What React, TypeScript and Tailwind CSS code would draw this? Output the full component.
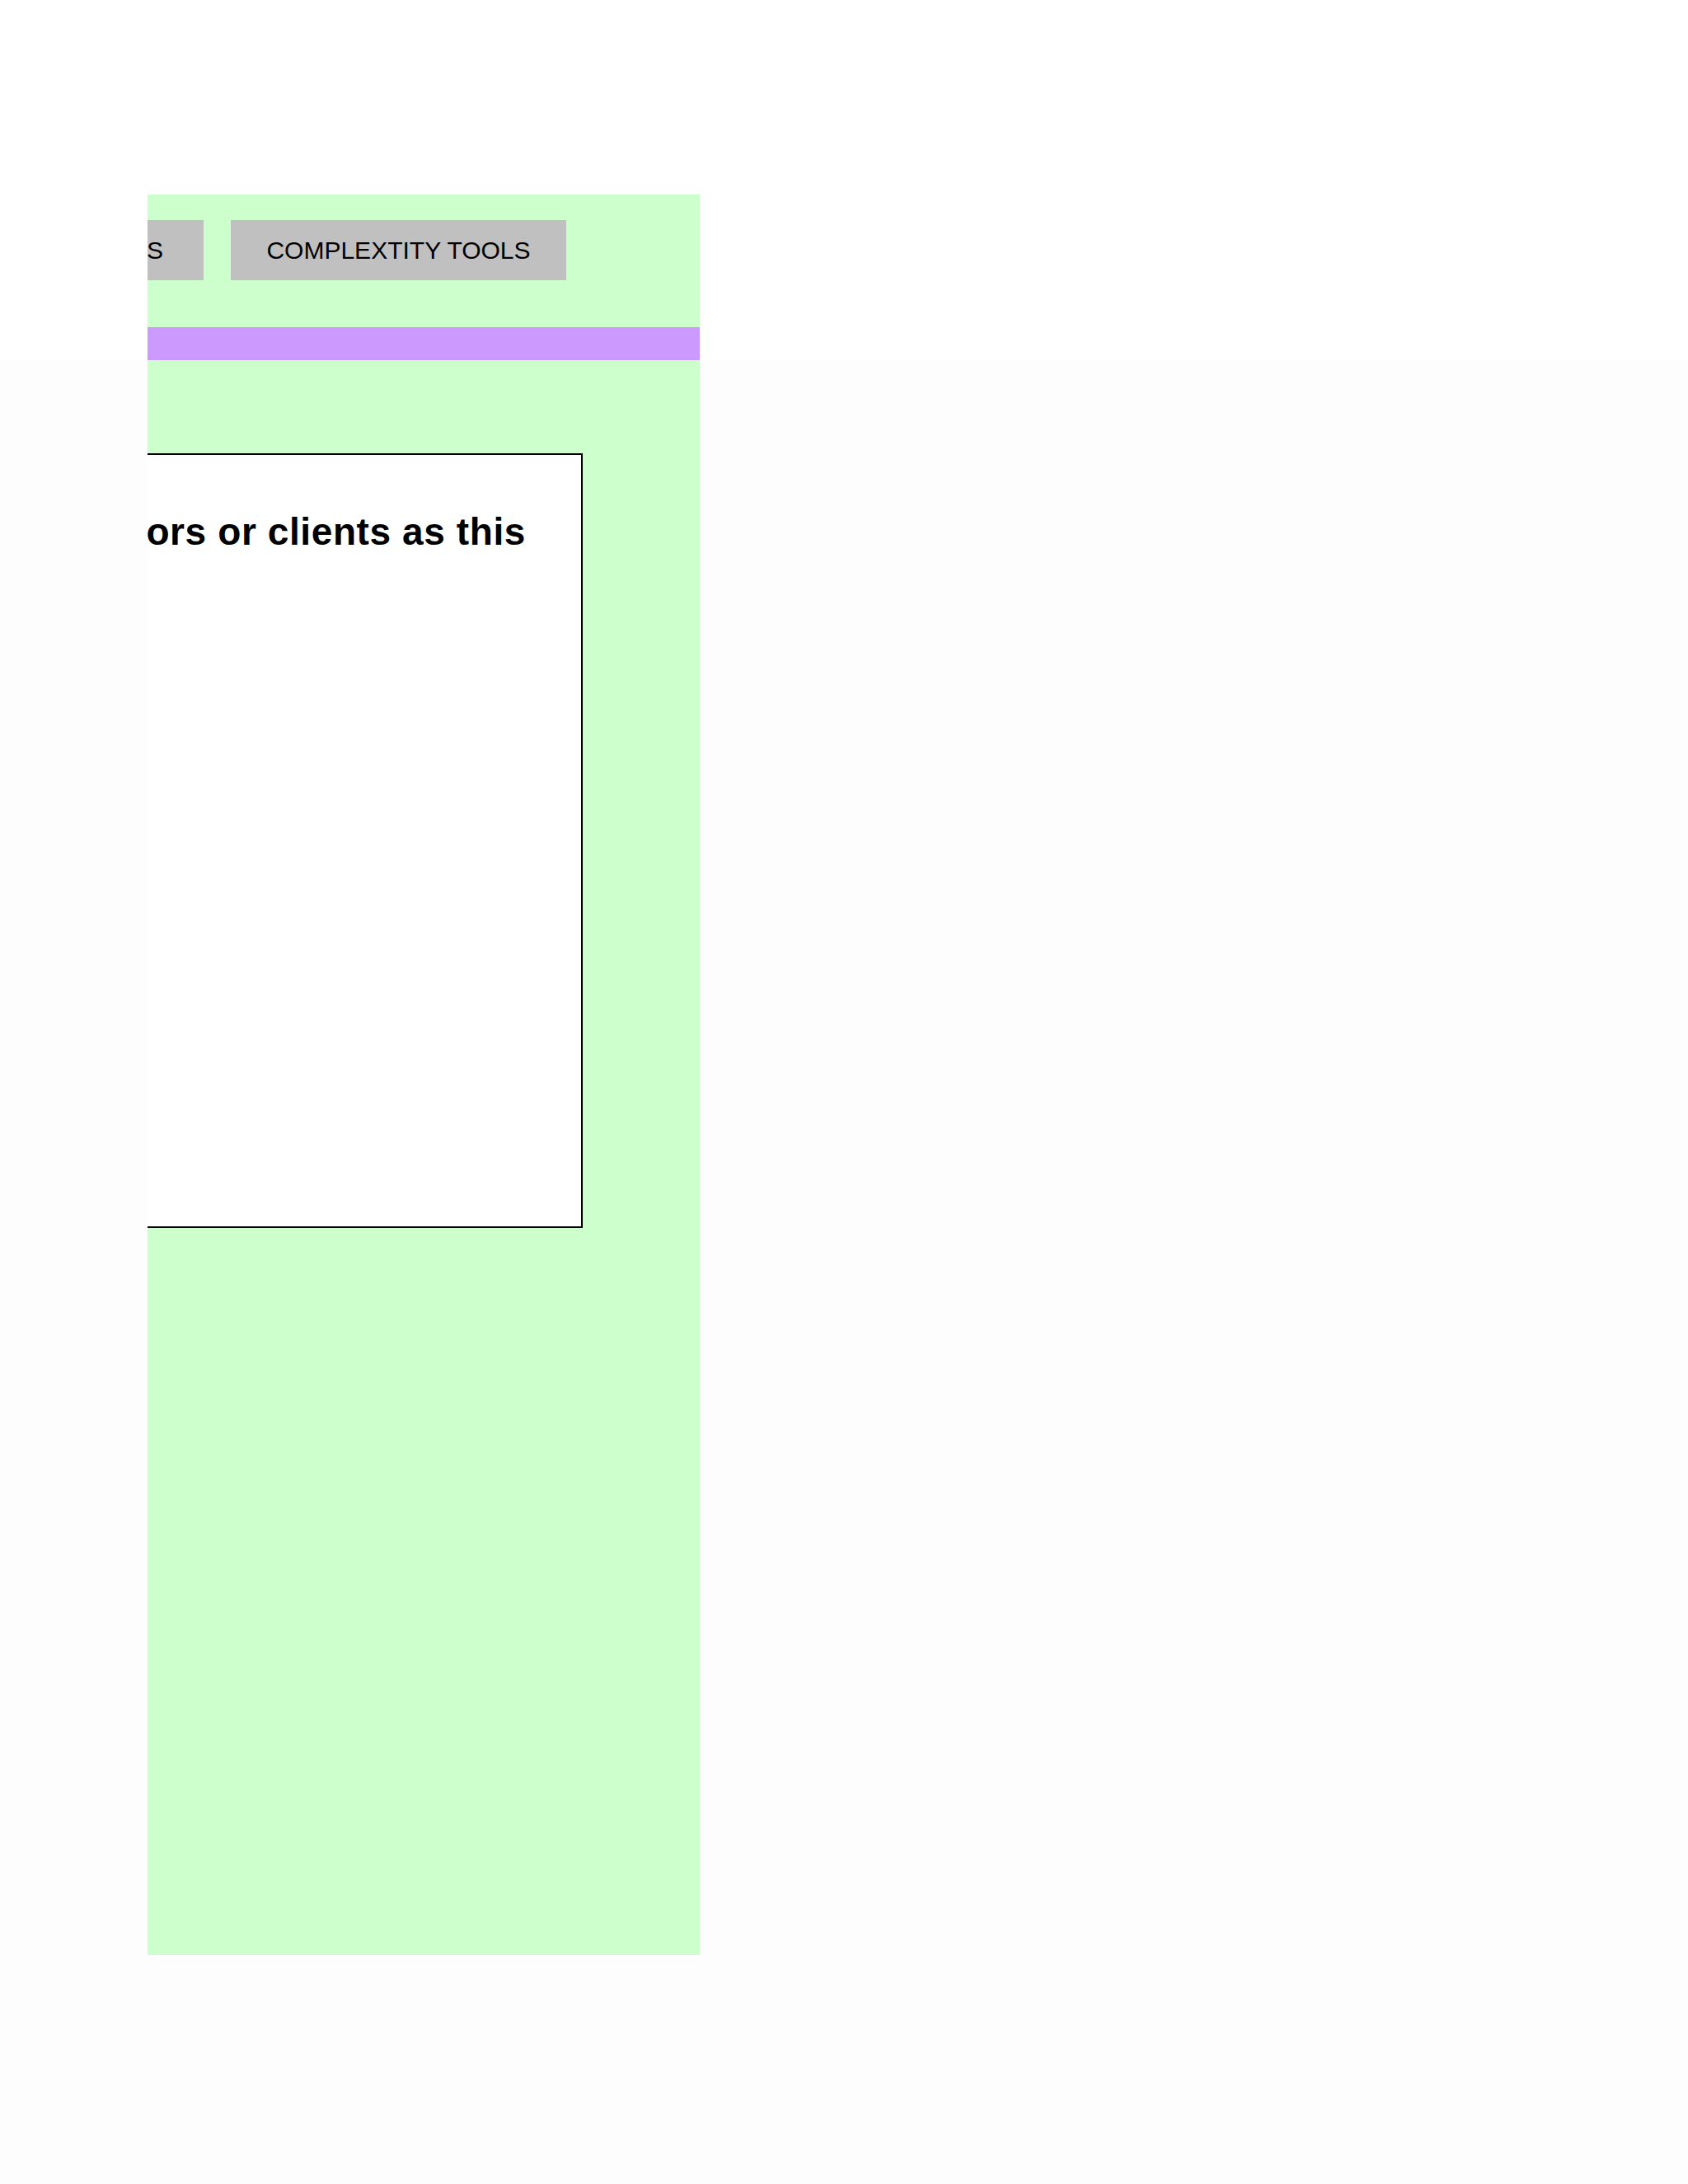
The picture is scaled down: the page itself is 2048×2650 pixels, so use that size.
import React from 'react';

const tabs = [
  { label: 'PROJECTS', width: 'w-[246px] pr-[12px]' },
  { label: 'COMPLEXTITY TOOLS', width: 'w-[407px]' },
];

export default function App() {
  return (
    <div
      className="min-h-[2650px] w-full bg-[linear-gradient(to_bottom,#ffffff_437px,#fdfdfd_437px)] pl-[179px] pt-[236px]"
      style={{ fontFamily: '"Liberation Sans", Arial, sans-serif' }}
    >
      {/* sidebar panel, scrolled sideways so the left part is cut off */}
      <div className="h-[2136px] w-[670px] overflow-hidden bg-[#ccffcc]">
        <div className="-ml-[330px] w-[1000px]">
          <nav className="flex gap-[33px] pl-[152px] pt-[31px]">
            {tabs.map(tab => (
              <button
                key={tab.label}
                className={`${tab.width} flex h-[73px] shrink-0 items-center justify-center bg-[#c0c0c0] text-[30px] leading-none text-black`}
              >
                {tab.label}
              </button>
            ))}
          </nav>

          <div className="mt-[57px] h-[40px] w-full bg-[#cc99ff]" />

          <div className="pl-[51px] pt-[113px]">
            <div className="flex h-[940px] w-[807px] justify-end border-2 border-black bg-white pr-[67px] pt-[70px]">
              <p className="whitespace-nowrap text-[46px] font-bold leading-none tracking-[0.6px] text-black">
                Share your work with competitors or clients as this
              </p>
            </div>
          </div>
        </div>
      </div>
    </div>
  );
}
